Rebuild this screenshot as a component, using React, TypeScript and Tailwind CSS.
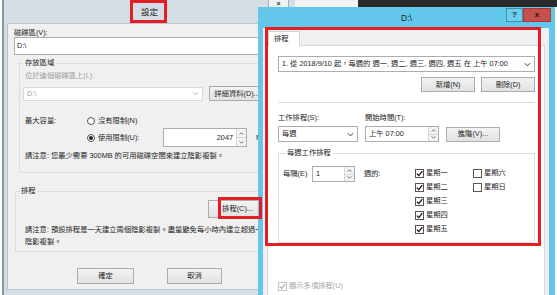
import * as React from 'react';

// small win8-style controls
const Btn = ({ children, className = '' }: { children: React.ReactNode; className?: string }) => (
  <div
    className={`h-[15px] border border-[#acacac] bg-linear-to-b from-[#f3f3f3] to-[#e2e2e2] flex items-center justify-center whitespace-nowrap ${className}`}
  >
    {children}
  </div>
);

const Chevron = ({ color = '#333' }: { color?: string }) => (
  <svg viewBox="0 0 8 5" className="w-[7px] h-[5px]">
    <path d="M1 1 L4 4 L7 1" fill="none" stroke={color} strokeWidth="1.1" />
  </svg>
);

const Combo = ({ value, className = '', disabled = false }: { value: string; className?: string; disabled?: boolean }) => (
  <div
    className={`border bg-white flex items-center justify-between pl-[3px] pr-[3px] ${
      disabled ? 'border-[#d9d9d9] text-[#a0a0a0]' : 'border-[#abadb3]'
    } ${className}`}
  >
    <span className="whitespace-nowrap">{value}</span>
    <Chevron color={disabled ? '#b0b0b0' : '#333'} />
  </div>
);

const Spin = ({ value, className = '', right = false }: { value: string; className?: string; right?: boolean }) => (
  <div className={`border border-[#abadb3] bg-white flex ${className}`}>
    <div className={`flex-1 flex items-center px-[3px] ${right ? 'justify-end' : ''}`}>{value}</div>
    <div className="w-[10px] flex flex-col border-l border-[#d6d6d6] bg-[#f4f4f4]">
      <div className="flex-1 flex items-center justify-center border-b border-[#d6d6d6]">
        <svg viewBox="0 0 6 4" className="w-[5px] h-[3px]">
          <path d="M0.5 3.5 L3 1 L5.5 3.5" fill="none" stroke="#444" strokeWidth="1" />
        </svg>
      </div>
      <div className="flex-1 flex items-center justify-center">
        <svg viewBox="0 0 6 4" className="w-[5px] h-[3px]">
          <path d="M0.5 0.5 L3 3 L5.5 0.5" fill="none" stroke="#444" strokeWidth="1" />
        </svg>
      </div>
    </div>
  </div>
);

const Check = ({ on = true, disabled = false }: { on?: boolean; disabled?: boolean }) => (
  <span
    className={`w-[9px] h-[9px] border bg-white flex items-center justify-center shrink-0 ${
      disabled ? 'border-[#c4c4c4]' : 'border-[#555]'
    }`}
  >
    {on && (
      <svg viewBox="0 0 7 7" className="w-[7px] h-[7px]">
        <path d="M0.8 3.6 L2.8 5.6 L6.3 1.2" fill="none" stroke={disabled ? '#b0b0b0' : '#111'} strokeWidth="1.3" />
      </svg>
    )}
  </span>
);

const Radio = ({ on = false }: { on?: boolean }) => (
  <span className="w-[8px] h-[8px] rounded-full border border-[#555] bg-white flex items-center justify-center shrink-0">
    {on && <span className="w-[4px] h-[4px] rounded-full bg-[#222]" />}
  </span>
);

const Day = ({ label, on }: { label: string; on: boolean }) => (
  <div className="h-[14px] flex items-center gap-[2px]">
    <Check on={on} />
    <span>{label}</span>
  </div>
);

export default function App() {
  return (
    <div className="relative w-[557px] h-[295px] overflow-hidden bg-white text-[7.3px] leading-[10px] text-[#1e1e1e] font-[Liberation_Sans,Noto_Sans_CJK_TC,sans-serif]">
      {/* desktop pieces behind */}
      <div className="absolute left-[295px] top-0 w-[63px] h-[7px] bg-[#f3f3f3]" />
      <div className="absolute left-[358px] top-0 w-[199px] h-[7px] bg-[#2b2b2b]" />

      {/* left dialog: 設定 */}
      <div className="absolute left-[2px] top-0 w-[293px] h-[295px] border-l-2 border-[#8896a0] bg-[#d5dee5] flex flex-col">
        <div className="h-[23px] grid grid-cols-[1fr_auto_1fr] items-center">
          <div />
          <div className="text-[8.5px] text-[#222]">設定</div>
          <div className="h-full flex justify-end items-start pr-[6px]">
            <div className="w-[21px] h-[18px] bg-[#eef1f3] border border-[#a3adb4] border-t-0 flex justify-center text-[7px] leading-[8px] font-bold text-[#333]">
              ×
            </div>
          </div>
        </div>

        <div className="flex-1 ml-[3px] mb-[5px] bg-[#f0f0f0] border border-[#bcc5cb] pl-[6px] pt-[4px]">
          <div className="h-[9px] leading-[9px]">磁碟區(V):</div>
          <div className="h-[18px] w-[300px] bg-white border border-[#abadb3] flex items-center px-[2px]">D:\</div>

          {/* 存放區域 */}
          <fieldset className="mt-[3px] ml-[5px] w-[300px] border border-[#dcdcdc] pl-[3px] pb-[11px]">
            <legend className="px-[2px] h-[10px]">存放區域</legend>
            <div className="mt-[3px] ml-[2px] text-[#a0a0a0]">位於這個磁碟區上(L):</div>
            <div className="mt-[5px] flex items-center">
              <Combo value="D:\" disabled className="w-[180px] h-[14px]" />
              <Btn className="ml-[6px] w-[56px] h-[15px]">詳細資料(D)...</Btn>
            </div>
            <div className="mt-[15px] ml-[2px] flex">
              <div className="w-[62px]">最大容量:</div>
              <div className="flex flex-col">
                <div className="h-[10px] flex items-center gap-[3px]">
                  <Radio />
                  <span>沒有限制(N)</span>
                </div>
                <div className="mt-[2px] h-[19px] flex items-center">
                  <div className="w-[76px] flex items-center gap-[3px]">
                    <Radio on />
                    <span>使用限制(U):</span>
                  </div>
                  <Spin value="2047" right className="w-[84px] h-[19px]" />
                  <span className="ml-[9px]">MB</span>
                </div>
              </div>
            </div>
            <div className="mt-[4px] ml-[2px] whitespace-nowrap">請注意: 您最少需要 300MB 的可用磁碟空間來建立陰影複製。</div>
          </fieldset>

          {/* 排程 */}
          <fieldset className="mt-[13px] ml-[1px] w-[300px] border border-[#dcdcdc] pl-[4px] pb-[3px]">
            <legend className="px-[1px] h-[10px]">排程</legend>
            <Btn className="mt-[4px] ml-[188px] w-[59px] h-[18px]">排程(C)...</Btn>
            <p className="mt-[6px] ml-[5px] leading-[12px] whitespace-nowrap">
              請注意: 預設排程是一天建立兩個陰影複製。盡量避免每小時內建立超過一個
              <br />
              陰影複製。
            </p>
          </fieldset>

          <div className="mt-[16px] ml-[63px] flex gap-[33px]">
            <Btn className="w-[57px] h-[16px]">確定</Btn>
            <Btn className="w-[55px] h-[16px]">取消</Btn>
          </div>
        </div>
      </div>

      {/* right dialog: D:\ */}
      <div className="absolute left-[258px] top-[7px] w-[297px] h-[300px] bg-[#63c7eb] flex flex-col">
        <div className="h-[21px] grid grid-cols-[1fr_auto_1fr] items-center">
          <div />
          <div className="text-[8.5px] text-[#222]">D:\</div>
          <div className="h-full flex justify-end items-start pr-[4px] pt-[1px]">
            <div className="w-[17px] h-[14px] border border-[#3f8fb0] bg-[#6fcdee] flex items-center justify-center font-bold text-[8px] text-[#1b2b33]">
              ?
            </div>
            <div className="w-[28px] h-[14px] bg-[#c7504c] border border-[#a33c38] flex items-center justify-center font-bold text-[8px] text-[#2a1515]">
              x
            </div>
          </div>
        </div>

        <div className="flex-1 ml-[5px] mr-[6px] bg-[#f0f0f0] pt-[3px] flex flex-col">
          <div className="relative z-10 ml-[5px] w-[32px] h-[15px] bg-white border border-b-0 border-[#d3d3d3] flex items-center pl-[5px]">
            排程
          </div>
          <div className="-mt-[1px] ml-[4px] mr-[4px] flex-1 bg-white border border-[#d9d9d9] pl-[10px] pr-[9px]">
            <Combo value="1. 從 2018/9/10 起，每週的 週一, 週二, 週三, 週四, 週五 在 上午 07:00" className="mt-[10px] h-[16px]" />
            <div className="mt-[5px] flex justify-end gap-[6px]">
              <Btn className="w-[54px]">新增(N)</Btn>
              <Btn className="w-[54px]">刪除(D)</Btn>
            </div>
            <div className="mt-[10px] border-t border-[#dcdcdc]" />

            <div className="mt-[10px] flex">
              <div className="w-[87px]">工作排程(S):</div>
              <div>開始時間(T):</div>
            </div>
            <div className="mt-[3px] flex items-center h-[16px]">
              <Combo value="每週" className="w-[80px] h-[16px]" />
              <Spin value="上午 07:00" className="ml-[7px] w-[74px] h-[16px]" />
              <Btn className="ml-[7px] w-[54px]">進階(V)...</Btn>
            </div>

            <fieldset className="mt-[6px] border border-[#dcdcdc] pl-[4px] pb-[6px]">
              <legend className="ml-[2px] px-[2px] h-[10px]">每週工作排程</legend>
              <div className="mt-[8px] flex items-start">
                <div className="h-[16px] flex items-center">
                  <span className="w-[29px]">每隔(E)</span>
                  <Spin value="1" className="w-[43px] h-[16px]" />
                  <span className="ml-[9px] w-[51px]">週的:</span>
                </div>
                <div className="w-[58px] flex flex-col">
                  <Day label="星期一" on />
                  <Day label="星期二" on />
                  <Day label="星期三" on />
                  <Day label="星期四" on />
                  <Day label="星期五" on />
                </div>
                <div className="flex flex-col">
                  <Day label="星期六" on={false} />
                  <Day label="星期日" on={false} />
                </div>
              </div>
            </fieldset>

            <div className="mt-[38px] h-[10px] flex items-center gap-[2px] text-[#a8a8a8]">
              <Check disabled />
              <span>顯示多項排程(U)</span>
            </div>
          </div>
        </div>
      </div>

      {/* red annotation boxes */}
      <div className="absolute left-[130px] top-0 w-[37px] h-[23px] border-[3px] border-[#e21f27]" />
      <div className="absolute left-[218px] top-[197px] w-[44px] h-[22px] border-[3px] border-[#e21f27]" />
      <div className="absolute left-[265px] top-[27px] w-[276px] h-[219px] border-[3px] border-[#e21f27]" />
    </div>
  );
}
